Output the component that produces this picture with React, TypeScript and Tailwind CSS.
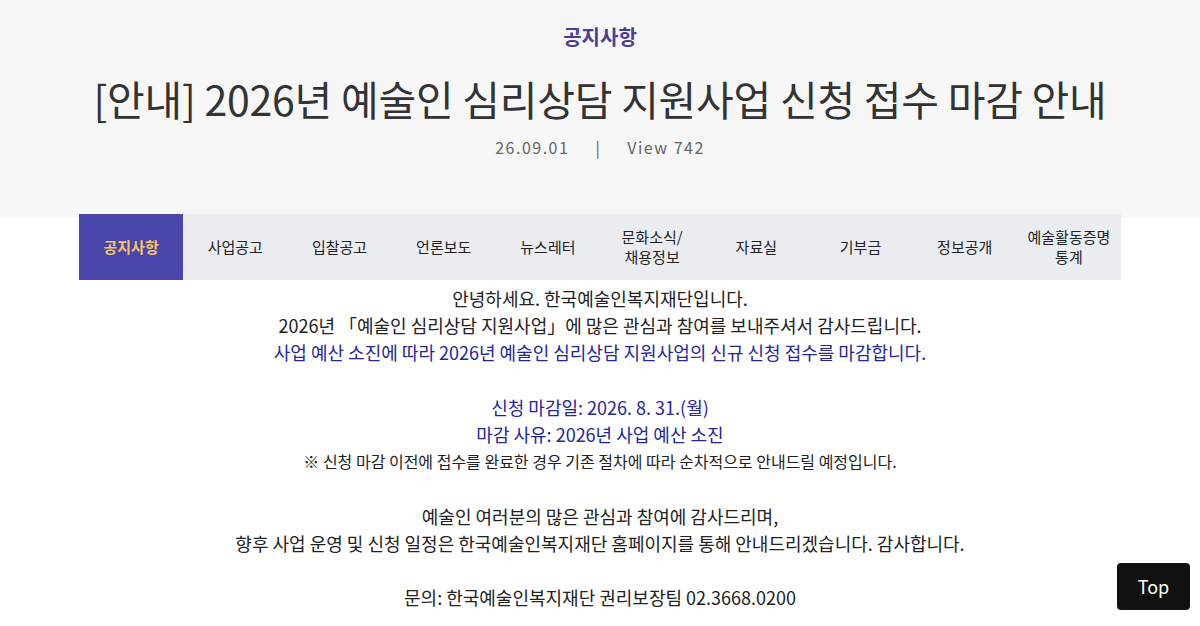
import React from 'react';

const tabs: string[][] = [
  ['공지사항'],
  ['사업공고'],
  ['입찰공고'],
  ['언론보도'],
  ['뉴스레터'],
  ['문화소식/', '채용정보'],
  ['자료실'],
  ['기부금'],
  ['정보공개'],
  ['예술활동증명', '통계'],
];

const App: React.FC = () => {
  return (
    <div
      className="relative min-h-[626px] bg-white text-[#222]"
      style={{ fontFamily: '"Noto Sans CJK KR", "Noto Sans", sans-serif' }}
    >
      {/* header */}
      <div className="bg-[#f7f7f8] h-[218px] pt-[22px] text-center">
        <p className="text-[20px] font-bold text-[#4a3d9a] leading-[30px]">공지사항</p>
        <h1 className="mt-[22px] text-[41px] leading-[48px] text-[#333] tracking-[-0.25px]">
          [안내] 2026년 예술인 심리상담 지원사업 신청 접수 마감 안내
        </h1>
        <div className="mt-[13px] flex justify-center items-center text-[16px] text-[#666] tracking-[1.5px] leading-[24px]">
          <span>26.09.01</span>
          <span className="mx-[26px]">|</span>
          <span>View 742</span>
        </div>
      </div>

      {/* tabs */}
      <div className="-mt-[4px] mx-[79px] grid grid-cols-10 bg-[#eaecef] h-[66px]">
        {tabs.map((t, i) => (
          <div
            key={i}
            className={
              'flex flex-col items-center justify-center text-[15px] leading-[20px] ' +
              (i === 0 ? 'bg-[#4a45a8] text-[#f2c56e] font-bold' : 'text-[#222]')
            }
          >
            {t.map((l) => (
              <span key={l}>{l}</span>
            ))}
          </div>
        ))}
      </div>

      {/* body */}
      <div className="pt-[5px] text-center text-[18px] leading-[27.2px]">
        <p>안녕하세요. 한국예술인복지재단입니다.</p>
        <p>2026년 「예술인 심리상담 지원사업」에 많은 관심과 참여를 보내주셔서 감사드립니다.</p>
        <p className="text-[#26269c]">사업 예산 소진에 따라 2026년 예술인 심리상담 지원사업의 신규 신청 접수를 마감합니다.</p>
        <p>&nbsp;</p>
        <p className="text-[#26269c]">신청 마감일: 2026. 8. 31.(월)</p>
        <p className="text-[#26269c]">마감 사유: 2026년 사업 예산 소진</p>
        <p className="text-[16px]">※ 신청 마감 이전에 접수를 완료한 경우 기존 절차에 따라 순차적으로 안내드릴 예정입니다.</p>
        <p>&nbsp;</p>
        <p>예술인 여러분의 많은 관심과 참여에 감사드리며,</p>
        <p>향후 사업 운영 및 신청 일정은 한국예술인복지재단 홈페이지를 통해 안내드리겠습니다. 감사합니다.</p>
        <p>&nbsp;</p>
        <p>문의: 한국예술인복지재단 권리보장팀 02.3668.0200</p>
      </div>

      <button className="absolute left-[1117px] top-[563px] w-[73px] h-[47px] rounded-[4px] bg-[#111] text-white text-[18px]">
        Top
      </button>
    </div>
  );
};

export default App;
